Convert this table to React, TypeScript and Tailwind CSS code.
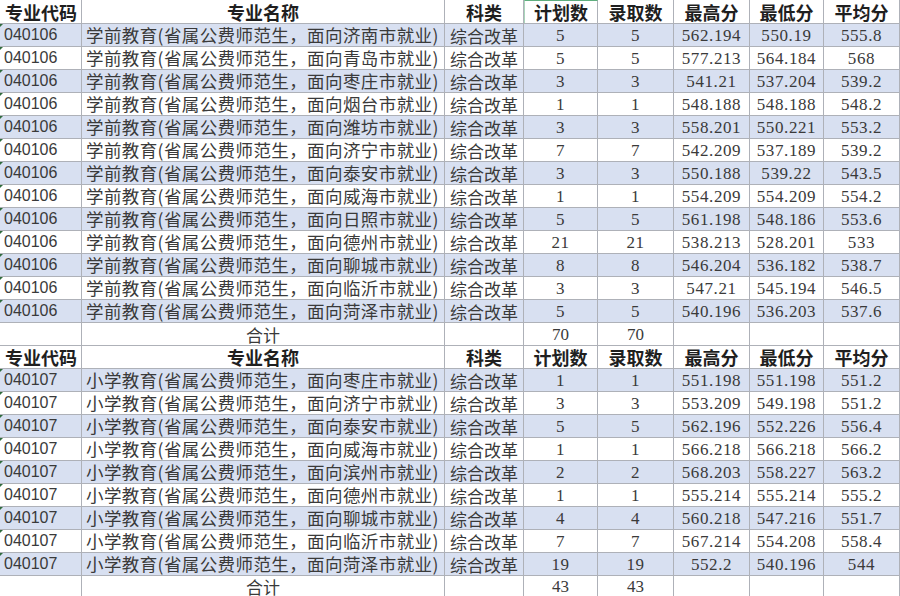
import { FC } from 'react';

type Row = [string, number, number, string, string, string];

const SECTION_A: Row[] = [
  ['济南', 5, 5, '562.194', '550.19', '555.8'],
  ['青岛', 5, 5, '577.213', '564.184', '568'],
  ['枣庄', 3, 3, '541.21', '537.204', '539.2'],
  ['烟台', 1, 1, '548.188', '548.188', '548.2'],
  ['潍坊', 3, 3, '558.201', '550.221', '553.2'],
  ['济宁', 7, 7, '542.209', '537.189', '539.2'],
  ['泰安', 3, 3, '550.188', '539.22', '543.5'],
  ['威海', 1, 1, '554.209', '554.209', '554.2'],
  ['日照', 5, 5, '561.198', '548.186', '553.6'],
  ['德州', 21, 21, '538.213', '528.201', '533'],
  ['聊城', 8, 8, '546.204', '536.182', '538.7'],
  ['临沂', 3, 3, '547.21', '545.194', '546.5'],
  ['菏泽', 5, 5, '540.196', '536.203', '537.6'],
];

const SECTION_B: Row[] = [
  ['枣庄', 1, 1, '551.198', '551.198', '551.2'],
  ['济宁', 3, 3, '553.209', '549.198', '551.2'],
  ['泰安', 5, 5, '562.196', '552.226', '556.4'],
  ['威海', 1, 1, '566.218', '566.218', '566.2'],
  ['滨州', 2, 2, '568.203', '558.227', '563.2'],
  ['德州', 1, 1, '555.214', '555.214', '555.2'],
  ['聊城', 4, 4, '560.218', '547.216', '551.7'],
  ['临沂', 7, 7, '567.214', '554.208', '558.4'],
  ['菏泽', 19, 19, '552.2', '540.196', '544'],
];

const GRID =
  'grid grid-cols-[82px_363px_79px_74px_76px_76px_74px_76px] border-b border-[#aeb1b8]';
const CELL = 'flex items-center border-r border-[#aeb1b8] whitespace-nowrap';
const CJK = "'Noto Sans CJK SC', sans-serif";
const NUM = "'Liberation Serif', 'Noto Sans CJK SC', serif";

const HeaderRow: FC<{ first?: boolean }> = ({ first }) => {
  const cols = ['科类', '计划数', '录取数', '最高分', '最低分', '平均分'];
  return (
    <div
      className={`${GRID} ${first ? 'h-[24px]' : 'h-[23px]'} bg-white font-bold text-[18px] leading-none text-[#1f1f1f]`}
      style={{ fontFamily: CJK }}>
      <div className={`${CELL} pl-[5px]`}>专业代码</div>
      <div className={`${CELL} justify-center`}>专业名称</div>
      {cols.map((c, i) => (
        <div
          key={c}
          className={`${CELL} justify-center ${first && i === 1 ? 'border-t border-t-[#5fae7e] border-l border-l-[#a9d6ba]' : ''}`}>
          {c}
        </div>
      ))}
    </div>
  );
};

const DataRow: FC<{ code: string; major: string; row: Row; blue: boolean }> = ({
  code,
  major,
  row,
  blue,
}) => {
  const [city, plan, admit, hi, lo, avg] = row;
  return (
    <div
      className={`${GRID} h-[23px] ${blue ? 'bg-[#d8e0f1]' : 'bg-white'} text-[#3a3a3a] leading-none`}>
      <div
        className={`${CELL} relative pl-[4px] text-[16px]`}
        style={{ fontFamily: "'Liberation Sans', sans-serif" }}>
        <span className="absolute left-0 top-0 h-0 w-0 border-t-[3px] border-r-[3px] border-t-[#2f6b3c] border-r-transparent" />
        {code}
      </div>
      <div
        className={`${CELL} pl-[4px] text-[17.5px] tracking-[0.4px]`}
        style={{ fontFamily: CJK }}>
        {major}(省属公费师范生，面向{city}市就业)
      </div>
      <div className={`${CELL} justify-center text-[17px]`} style={{ fontFamily: CJK }}>
        综合改革
      </div>
      {[plan, admit, hi, lo, avg].map((v, i) => (
        <div
          key={i}
          className={`${CELL} justify-center text-[17px] tracking-[0.6px]`}
          style={{ fontFamily: NUM }}>
          {v}
        </div>
      ))}
    </div>
  );
};

const TotalRow: FC<{ total: number; last?: boolean }> = ({ total, last }) => (
  <div
    className={`${GRID} ${last ? 'h-[20px] border-b-0' : 'h-[23px]'} bg-white text-[#3a3a3a] leading-none`}>
    <div className={CELL} />
    <div className={`${CELL} justify-center text-[17px]`} style={{ fontFamily: CJK }}>
      合计
    </div>
    <div className={CELL} />
    <div className={`${CELL} justify-center text-[17px]`} style={{ fontFamily: NUM }}>
      {total}
    </div>
    <div className={`${CELL} justify-center text-[17px]`} style={{ fontFamily: NUM }}>
      {total}
    </div>
    <div className={CELL} />
    <div className={CELL} />
    <div className={CELL} />
  </div>
);

export default function App() {
  return (
    <div className="h-[596px] w-[900px] overflow-hidden bg-white">
      <HeaderRow first />
      {SECTION_A.map((r, i) => (
        <DataRow key={`a${i}`} code="040106" major="学前教育" row={r} blue={i % 2 === 0} />
      ))}
      <TotalRow total={70} />
      <HeaderRow />
      {SECTION_B.map((r, i) => (
        <DataRow key={`b${i}`} code="040107" major="小学教育" row={r} blue={i % 2 === 0} />
      ))}
      <TotalRow total={43} last />
    </div>
  );
}
